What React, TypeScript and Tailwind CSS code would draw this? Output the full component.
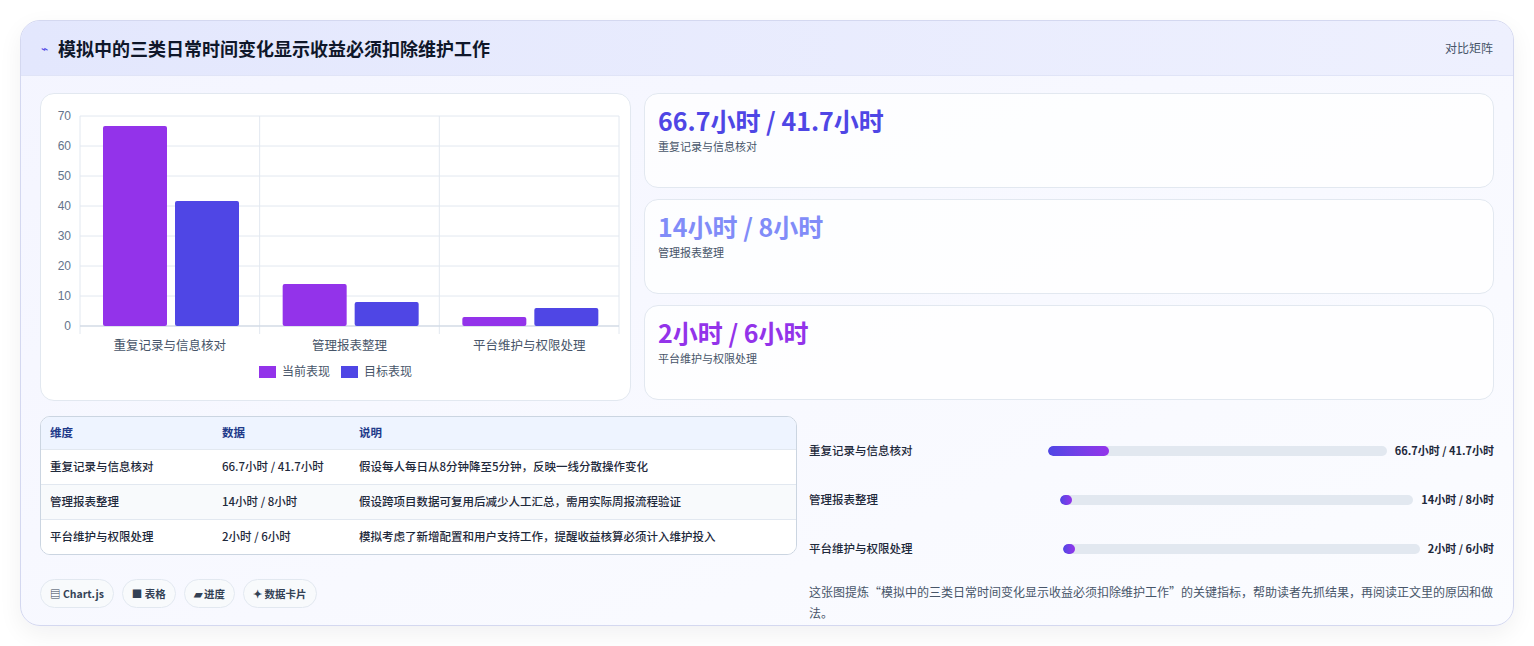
import React from "react";

const F = { fontFamily: '"Noto Sans CJK SC","Noto Sans",sans-serif' };

const data = [
  { name: "重复记录与信息核对", a: 66.7, b: 41.7, v: "66.7小时 / 41.7小时", d: "假设每人每日从8分钟降至5分钟，反映一线分散操作变化" },
  { name: "管理报表整理", a: 14, b: 8, v: "14小时 / 8小时", d: "假设跨项目数据可复用后减少人工汇总，需用实际周报流程验证" },
  { name: "平台维护与权限处理", a: 3, b: 6, v: "2小时 / 6小时", d: "模拟考虑了新增配置和用户支持工作，提醒收益核算必须计入维护投入" },
];

function Chart() {
  const top = 22, h = 210, left = 39, w = 539;
  const y = (v: number) => top + h - (v / 70) * h;
  const cw = w / 3;
  return (
    <svg width="590" height="307" className="block">
      {[0, 10, 20, 30, 40, 50, 60, 70].map((t) => (
        <g key={t}>
          <line x1={left} x2={left + w} y1={y(t)} y2={y(t)} stroke="#e2e8f0" />
          <text x={30} y={y(t) + 4} textAnchor="end" fontSize="12" fill="#64748b" fontFamily="Liberation Sans">{t}</text>
        </g>
      ))}
      {[0, 1, 2, 3].map((i) => (
        <line key={i} x1={left + i * cw} x2={left + i * cw} y1={top} y2={top + h + 8} stroke="#e2e8f0" />
      ))}
      <line x1={left} x2={left + w} y1={top + h} y2={top + h} stroke="#cbd5e1" />
      {data.map((d, i) => {
        const x0 = left + i * cw + 23;
        return (
          <g key={i}>
            <rect x={x0} y={y(d.a)} width={64} height={top + h - y(d.a)} rx={2} fill="#9333ea" />
            <rect x={x0 + 72} y={y(d.b)} width={64} height={top + h - y(d.b)} rx={2} fill="#4f46e5" />
            <text x={left + i * cw + cw / 2} y={256} textAnchor="middle" fontSize="12.5" fill="#475569" style={F}>{d.name}</text>
          </g>
        );
      })}
      <rect x={218} y={272} width={17} height={12} fill="#9333ea" />
      <text x={241} y={282} fontSize="12" fill="#475569" style={F}>当前表现</text>
      <rect x={300} y={272} width={17} height={12} fill="#4f46e5" />
      <text x={323} y={282} fontSize="12" fill="#475569" style={F}>目标表现</text>
    </svg>
  );
}

const metrics = [
  { v: "66.7小时 / 41.7小时", l: "重复记录与信息核对", c: "text-[#4f46e5]" },
  { v: "14小时 / 8小时", l: "管理报表整理", c: "text-[#818cf8]" },
  { v: "2小时 / 6小时", l: "平台维护与权限处理", c: "text-[#9333ea]" },
];

const bars = [
  { lw: "w-[239px]", fill: "w-[18%]" },
  { lw: "w-[251px]", fill: "w-[12px]" },
  { lw: "w-[254px]", fill: "w-[12px]" },
];

export default function App() {
  return (
    <div className="w-[1534px] h-[646px] bg-white pt-[20px] px-[20px]" style={F}>
      <div className="w-[1494px] h-[606px] rounded-[20px] border border-[#d4d8f0] bg-gradient-to-br from-[#f4f5ff] to-[#fbfcff] overflow-hidden shadow-[0_8px_24px_rgba(15,23,42,0.06)]">
        <div className="h-[55px] flex items-center justify-between px-[20px] bg-gradient-to-r from-[#e3e7fd] to-[#eef0fe] border-b border-[#e0e4f7]">
          <div className="flex items-center gap-[10px]">
            <span className="text-[#4f46e5] text-[12px]">⌁</span>
            <span className="text-[18px] font-bold text-[#0f172a]">模拟中的三类日常时间变化显示收益必须扣除维护工作</span>
          </div>
          <span className="text-[12px] text-[#475569]">对比矩阵</span>
        </div>
        <div className="px-[19px] pt-[17px]">
          <div className="flex gap-[13px]">
            <div className="w-[591px] h-[308px] bg-white rounded-[14px] border border-[#e2e8f0]">
              <Chart />
            </div>
            <div className="flex-1 flex flex-col gap-[11px]">
              {metrics.map((m) => (
                <div key={m.l} className="h-[95px] bg-white/80 rounded-[14px] border border-[#e2e8f0] px-[13px] pt-[9px]">
                  <div className={`text-[25px] font-bold leading-[34px] ${m.c}`}>{m.v}</div>
                  <div className="text-[11px] text-[#475569] mt-[1px]">{m.l}</div>
                </div>
              ))}
            </div>
          </div>
          <div className="flex gap-[12px] mt-[15px]">
            <div className="w-[757px]">
              <div className="rounded-[10px] border border-[#cbd5e1] overflow-hidden bg-white">
                <table className="w-full text-[11.5px] text-[#1e293b]">
                  <thead>
                    <tr className="bg-[#eef4ff] text-[#1e3a8a] text-left h-[32px]">
                      <th className="font-bold pl-[9px] w-[181px]">维度</th>
                      <th className="font-bold w-[137px]">数据</th>
                      <th className="font-bold">说明</th>
                    </tr>
                  </thead>
                  <tbody>
                    {data.map((d) => (
                      <tr key={d.name} className="border-t border-[#e2e8f0] h-[35px] odd:bg-white even:bg-[#f8fafc]">
                        <td className="pl-[9px] font-medium">{d.name}</td>
                        <td className="font-medium">{d.v}</td>
                        <td className="font-medium">{d.d}</td>
                      </tr>
                    ))}
                  </tbody>
                </table>
              </div>
              <div className="flex gap-[8px] mt-[24px]">
                {["▤ Chart.js", "■ 表格", "▰ 进度", "✦ 数据卡片"].map((t) => (
                  <span key={t} className="h-[29px] px-[9px] flex items-center rounded-full border border-[#e2e8f0] bg-[#f8fafc] text-[10.5px] font-bold text-[#334155]">{t}</span>
                ))}
              </div>
            </div>
            <div className="flex-1 pt-[10px]">
              {data.map((d, i) => (
                <div key={d.name} className="flex items-center h-[49px] text-[11.5px] font-medium text-[#1e293b]">
                  <span className={`${bars[i].lw} shrink-0`}>{d.name}</span>
                  <div className="flex-1 h-[10px] rounded-full bg-[#e2e8f0] overflow-hidden">
                    <div className={`h-full rounded-full bg-gradient-to-r from-[#4f46e5] to-[#9333ea] ${bars[i].fill}`} />
                  </div>
                  <span className="ml-[8px] font-bold text-[11px]">{d.v}</span>
                </div>
              ))}
              <p className="mt-[8px] text-[12px] leading-[21px] text-[#475569]">这张图提炼“模拟中的三类日常时间变化显示收益必须扣除维护工作”的关键指标，帮助读者先抓结果，再阅读正文里的原因和做法。</p>
            </div>
          </div>
        </div>
      </div>
    </div>
  );
}
